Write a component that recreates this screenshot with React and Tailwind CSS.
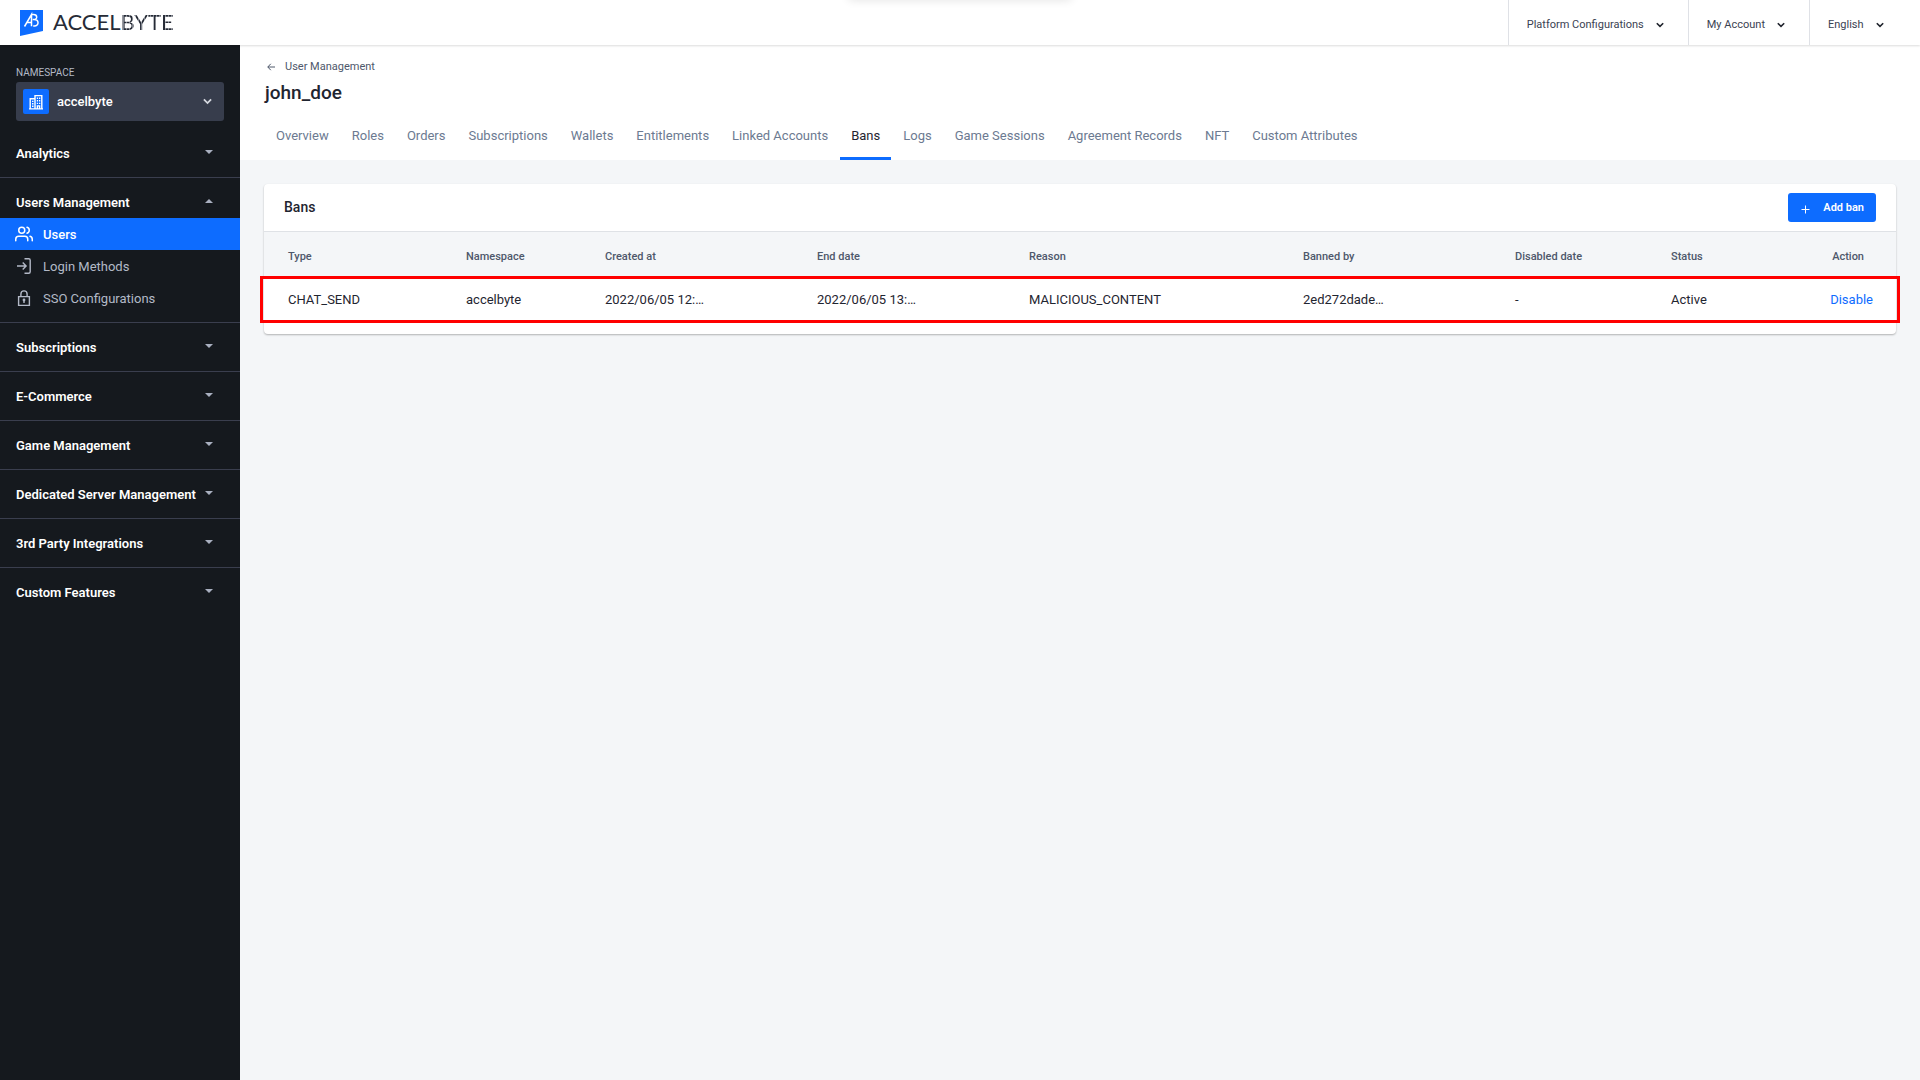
import React, { useState } from 'react';
import { FiUsers } from 'react-icons/fi';

const sections = [
  { name: 'Analytics' },
  {
    name: 'Users Management',
    items: [
      { name: 'Users', icon: UsersIcon, active: true },
      { name: 'Login Methods', icon: LoginIcon },
      { name: 'SSO Configurations', icon: LockIcon },
    ],
  },
  { name: 'Subscriptions' },
  { name: 'E-Commerce' },
  { name: 'Game Management' },
  { name: 'Dedicated Server Management' },
  { name: '3rd Party Integrations' },
  { name: 'Custom Features' },
];

const tabs = [
  'Overview',
  'Roles',
  'Orders',
  'Subscriptions',
  'Wallets',
  'Entitlements',
  'Linked Accounts',
  'Bans',
  'Logs',
  'Game Sessions',
  'Agreement Records',
  'NFT',
  'Custom Attributes',
];

const columns = [
  { key: 'type', label: 'Type', width: 'w-[178px]' },
  { key: 'namespace', label: 'Namespace', width: 'w-[139px]' },
  { key: 'createdAt', label: 'Created at', width: 'w-[212px]' },
  { key: 'endDate', label: 'End date', width: 'w-[212px]' },
  { key: 'reason', label: 'Reason', width: 'w-[274px]' },
  { key: 'bannedBy', label: 'Banned by', width: 'w-[212px]' },
  { key: 'disabledDate', label: 'Disabled date', width: 'w-[156px]' },
  { key: 'status', label: 'Status', width: 'w-[125px]' },
];

const bans = [
  {
    type: 'CHAT_SEND',
    namespace: 'accelbyte',
    createdAt: '2022/06/05 12:…',
    endDate: '2022/06/05 13:…',
    reason: 'MALICIOUS_CONTENT',
    bannedBy: '2ed272dade…',
    disabledDate: '-',
    status: 'Active',
  },
];

function UsersIcon() {
  return <FiUsers className="size-[18px]" />;
}

function LoginIcon() {
  return (
    <svg viewBox="0 0 18 18" className="size-[18px]" fill="none" stroke="currentColor" strokeWidth="1.4">
      <path d="M9.5 1.7h4.2a1.5 1.5 0 0 1 1.5 1.5v11.6a1.5 1.5 0 0 1-1.5 1.5H9.5" />
      <path d="M2 9h9M7.7 5.6 11.1 9l-3.4 3.4" />
    </svg>
  );
}

function LockIcon() {
  return (
    <svg viewBox="0 0 18 18" className="size-[18px]" fill="none" stroke="currentColor" strokeWidth="1.4">
      <path d="M3.6 7.6h10.8v8.8H3.6zM5.9 7.6V5A3.1 3.1 0 0 1 12.1 5v2.6" />
      <circle cx="9" cy="11" r="1.4" fill="currentColor" stroke="none" />
      <path d="M9 11v3" />
    </svg>
  );
}

function BuildingIcon() {
  return (
    <svg viewBox="0 0 16 16" className="size-4" fill="none" stroke="currentColor" strokeWidth="1.4">
      <path d="M1 14.9h14M7 14.5V1.6h6.8v13.3M7 4.8H2.2v10.1" />
      <path d="M8.8 4.2h1.3M11 4.2h1.3M8.8 6.8h1.3M11 6.8h1.3M8.8 9.4h1.3M11 9.4h1.3M4 7.4h1.5M4 9.8h1.5M4 12.2h1.5" />
      <path d="M9.4 14.9v-3h2.2v3" />
    </svg>
  );
}

function Chevron({ className }) {
  return (
    <svg viewBox="0 0 8 6" className={className} fill="none" stroke="currentColor" strokeWidth="1.6">
      <path d="M.8 1.2 4 4.4l3.2-3.2" />
    </svg>
  );
}

function Logo() {
  return (
    <a href="#" className="flex items-center gap-[10px] pl-5">
      <svg viewBox="0 0 23 26" className="h-[26px] w-[23px]">
        <path d="M0 0h23v21L0 26z" fill="#0d6cff" />
        <path
          d="M4.5 16.5 11.5 4.6v11.6M7 12.6h4.5M11 4.6h2.5c4.2 0 4.2 5 .4 5h-1.2M14 9.6c5.4 0 5.2 6.4.4 6.4h-1.2"
          fill="none"
          stroke="#fff"
          strokeWidth="1.5"
        />
      </svg>
      <span className="pb-0.5 font-[Lato] text-[22px] leading-7 text-[#262b36]">
        ACCEL
        <span className="bg-[repeating-linear-gradient(90deg,#262b36_0_2px,#7d828c_2px_3px)] bg-clip-text text-transparent">
          BYTE
        </span>
      </span>
    </a>
  );
}

function TopBar() {
  return (
    <header className="relative z-10 flex h-[45px] items-stretch justify-between overflow-x-clip bg-white text-[11px] leading-4 text-[#3b4252] shadow-[0_1px_2px_rgba(0,0,0,0.14)]">
      <div className="absolute -top-2 left-1/2 h-2 w-56 -translate-x-1/2 rounded shadow-[0_0_10px_rgba(0,0,0,0.12)]" />
      <Logo />
      <nav className="flex">
        <button type="button" className="flex items-center gap-3 border-l border-[#dfe1e6] pt-[5px] pr-6 pl-[18px]">
          Platform Configurations
          <Chevron className="h-[6px] w-2 text-[#20242d]" />
        </button>
        <button type="button" className="flex items-center gap-3 border-l border-[#dfe1e6] pt-[5px] pr-6 pl-[18px]">
          My Account
          <Chevron className="h-[6px] w-2 text-[#20242d]" />
        </button>
        <div className="flex items-center gap-3 border-l border-[#dfe1e6] pt-[5px] pr-9 pl-[18px]">
          <select aria-label="Language" className="appearance-none bg-transparent">
            <option>English</option>
          </select>
          <Chevron className="h-[6px] w-2 text-[#20242d]" />
        </div>
      </nav>
    </header>
  );
}

function SidebarSection({ section, last }) {
  const [open, setOpen] = useState(Boolean(section.items));

  return (
    <li className={last ? 'pb-2' : 'border-b border-[#3a3e4e] pb-2'}>
      <button
        type="button"
        onClick={() => setOpen(!open)}
        className="flex h-10 w-full items-center justify-between pt-[10px] pr-[27px] pl-4 text-[13px] leading-5 font-semibold text-white"
      >
        {section.name}
        <svg viewBox="0 0 8 4" className="mb-1 h-1 w-2" fill="#a9b0c0">
          <path d={open ? 'M0 4 4 0l4 4z' : 'M0 0h8L4 4z'} />
        </svg>
      </button>
      {open && section.items && (
        <ul>
          {section.items.map(({ name, icon: Icon, active }) => (
            <li key={name}>
              <a
                href="#"
                className={
                  active
                    ? 'flex h-8 items-center gap-[10px] bg-[#0d6cff] pl-[15px] text-[13px] font-medium text-white'
                    : 'flex h-8 items-center gap-[10px] pl-[15px] text-[13px] text-[#b3b9c7]'
                }
              >
                <Icon />
                <span className="pt-px leading-5">{name}</span>
              </a>
            </li>
          ))}
        </ul>
      )}
    </li>
  );
}

function Sidebar() {
  return (
    <aside className="w-60 shrink-0 bg-[#15191e] pt-5">
      <div className="px-4 pb-2">
        <label htmlFor="namespace" className="block pb-0.5 text-[10px] leading-[15px] text-[#b3b9c7]">
          NAMESPACE
        </label>
        <div className="flex h-[39px] items-center gap-2 rounded-[3px] bg-[#373d4c] pr-3 pl-[7px] text-white">
          <span className="flex h-[25px] w-[26px] items-center justify-center rounded-xs bg-[#0d6cff]">
            <BuildingIcon />
          </span>
          <select id="namespace" className="min-w-0 flex-1 appearance-none bg-transparent text-[13px] font-medium">
            <option>accelbyte</option>
          </select>
          <Chevron className="h-[7px] w-[9px] text-[#d5d8df]" />
        </div>
      </div>
      <ul>
        {sections.map((section, i) => (
          <SidebarSection key={section.name} section={section} last={i === sections.length - 1} />
        ))}
      </ul>
    </aside>
  );
}

function PageHeader() {
  return (
    <div className="bg-white px-6 pt-[13px]">
      <a href="#" className="flex items-center gap-[10px] pl-[3px] text-[11px] leading-[18px] text-[#4e586b]">
        <svg viewBox="0 0 8 8" className="size-2" fill="none" stroke="currentColor">
          <path d="M8 4H.8M3.8.8.8 4l3 3.2" />
        </svg>
        User Management
      </a>
      <h1 className="pt-[3px] pl-px text-[19px] leading-7 font-medium text-[#1f2530]">john_doe</h1>
      <nav className="flex gap-px pt-[5px]">
        {tabs.map((tab) => (
          <a
            key={tab}
            href="#"
            className={
              tab === 'Bans'
                ? 'h-12 border-b-3 border-[#0d6cff] px-[11px] pt-[14px] text-[13px] leading-5 text-[#1f2530] first:pl-3'
                : 'h-12 px-[11px] pt-[14px] text-[13px] leading-5 text-[#6c7a91] first:pl-3'
            }
          >
            {tab}
          </a>
        ))}
      </nav>
    </div>
  );
}

function BansCard() {
  return (
    <section className="relative m-6 rounded bg-white pb-[13px] shadow-[0_1px_2px_rgba(0,0,0,0.28)]">
      <div className="flex h-12 items-center justify-between border-b border-[#dfe2e6] pr-5 pl-5">
        <h2 className="pb-0.5 text-sm font-medium text-[#1f2530]">Bans</h2>
        <button
          type="button"
          className="flex h-[29px] w-[88px] items-center justify-between rounded-[3px] bg-[#0d6cff] px-3 text-[11px] leading-4 font-semibold text-white"
        >
          <svg viewBox="0 0 10 10" className="mt-[3px] size-[10px]" fill="none" stroke="currentColor">
            <path d="M5.5 1.5v8M1.5 5.5h8" />
          </svg>
          <span className="pt-px">Add ban</span>
        </button>
      </div>
      <table className="w-full table-fixed text-left">
        <thead className="bg-[#f4f6f8] text-[11px] leading-4 text-[#4e586b]">
          <tr className="h-[47px]">
            {columns.map((col) => (
              <th key={col.key} className={`${col.width} pt-[3px] pl-6 font-medium`}>
                {col.label}
              </th>
            ))}
            <th className="w-[124px] pt-[3px] pr-8 text-right font-medium">Action</th>
          </tr>
        </thead>
        <tbody className="text-[13px] text-[#1f2530]">
          {bans.map((ban) => (
            <tr key={ban.bannedBy} className="h-[41px] border-b border-[#dfe2e6]">
              {columns.map((col) => (
                <td key={col.key} className="truncate pl-6">
                  {ban[col.key]}
                </td>
              ))}
              <td className="pr-[23px] text-right">
                <button type="button" className="text-[#0d6cff]">
                  Disable
                </button>
              </td>
            </tr>
          ))}
        </tbody>
      </table>
      {/* highlight frame over the first ban */}
      <div className="pointer-events-none absolute -inset-x-1 top-[92px] h-[47px] border-3 border-[#ff0000]" />
    </section>
  );
}

export default function App() {
  return (
    <div className="flex min-h-screen flex-col bg-[#f4f6f8] font-[Roboto,sans-serif]">
      <TopBar />
      <div className="flex flex-1">
        <Sidebar />
        <main className="min-w-0 flex-1">
          <PageHeader />
          <BansCard />
        </main>
      </div>
    </div>
  );
}
